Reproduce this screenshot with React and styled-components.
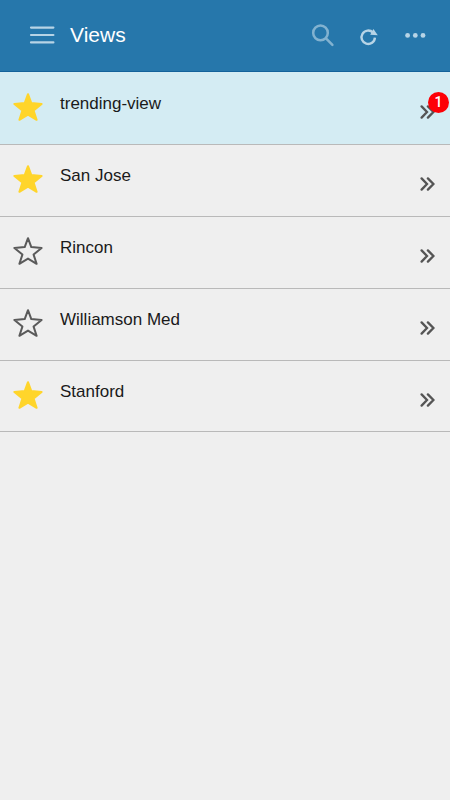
import React, { useState } from "react";
import styled, { createGlobalStyle } from "styled-components";

const GlobalStyle = createGlobalStyle`
  *, *::before, *::after {
    box-sizing: border-box;
  }
  body {
    margin: 0;
    background: #efefef;
    color: #1a1a1a;
    font-family: "Liberation Sans", Arial, sans-serif;
  }
`;

const Header = styled.header`
  display: flex;
  align-items: center;
  height: 72px;
  padding: 0 15px 2px 22px;
  background: #2677ab;
  border-bottom: 1px solid #13629a;
  color: white;
`;

const Title = styled.h1`
  flex: 1;
  margin: 0 0 0 8px;
  font-size: 21px;
  line-height: 24px;
  font-weight: 400;
`;

const Actions = styled.div`
  display: flex;
  gap: 6px;
`;

const IconButton = styled.button`
  display: flex;
  align-items: center;
  justify-content: center;
  width: 40px;
  height: 40px;
  padding: 0;
  border: 0;
  background: none;
  color: ${({ $color }) => $color || "#b7d4e6"};
  cursor: pointer;
`;

const ViewList = styled.ul`
  margin: 0;
  padding: 0;
  list-style: none;
`;

const ViewRow = styled.li`
  display: flex;
  align-items: flex-start;
  height: 72px;
  padding: 0 3px 0 8px;
  border-top: 1px solid #b9b9b9;
  background: ${({ $active }) => ($active ? "#d4ecf3" : "transparent")};

  &:first-child {
    border-top-color: transparent;
  }
  &:last-child {
    border-bottom: 1px solid #b9b9b9;
  }
`;

const StarButton = styled(IconButton)`
  margin-top: 14px;
  color: ${({ $starred }) => ($starred ? "#ffd52b" : "#5a5a5a")};
`;

const ViewName = styled.span`
  flex: 1;
  margin: 20px 0 0 12px;
  font-size: 17px;
  line-height: 22px;
`;

const OpenButton = styled(IconButton)`
  position: relative;
  margin-top: 19px;
  color: #555;
`;

const Badge = styled.span`
  position: absolute;
  top: 0;
  right: -2px;
  width: 21px;
  height: 21px;
  border-radius: 50%;
  background: #fd0006;
  color: white;
  font-family: Roboto, sans-serif;
  font-size: 14px;
  font-weight: 500;
  line-height: 21px;
  text-align: center;
`;

const MenuIcon = () => (
  <svg width="26" height="20" viewBox="0 0 26 20" fill="none" stroke="currentColor" strokeWidth="2.2" strokeLinecap="round">
    <path d="M2 2.6h22.4M2 10h22.4M2 17.4h22.4" />
  </svg>
);

const SearchIcon = () => (
  <svg width="24" height="24" viewBox="0 0 24 24" fill="none" stroke="currentColor" strokeWidth="2.5" strokeLinecap="round">
    <circle cx="9.5" cy="9.9" r="7.3" />
    <path d="M15 15.4l6.4 6.4" />
  </svg>
);

const RefreshIcon = () => (
  <svg width="20" height="24" viewBox="0 0 20 24" fill="none">
    <path d="M14 9.6A6.7 6.7 0 1 0 15.9 14.6" stroke="currentColor" strokeWidth="2.4" />
    <path d="M14.4 6l4.4 6.2-7.6-.4z" fill="currentColor" />
  </svg>
);

const MoreIcon = () => (
  <svg width="22" height="6" viewBox="0 0 22 6" fill="currentColor">
    <circle cx="3.6" cy="3.4" r="2.4" />
    <circle cx="11.3" cy="3.4" r="2.4" />
    <circle cx="19" cy="3.4" r="2.4" />
  </svg>
);

const StarIcon = ({ filled }) => (
  <svg width="30" height="28" viewBox="0 0 30 28" fill={filled ? "currentColor" : "none"} stroke="currentColor" strokeWidth="2" strokeLinejoin="round">
    <path d="M15 1.2L18.3 10.1L28.6 11L20.6 17.6L23.6 26.8L15 21.6L6.4 26.8L9.4 17.6L1.4 11L11.7 10.1Z" />
  </svg>
);

const OpenIcon = () => (
  <svg width="16" height="16" viewBox="0 0 16 16" fill="none" stroke="currentColor" strokeWidth="2.3" strokeLinecap="round">
    <path d="M2.6 2.4L8 8L2.6 13.6M8.9 2.4L14.4 8L8.9 13.6" />
  </svg>
);

const initialViews = [
  { id: 1, name: "trending-view", starred: true, active: true, alerts: 1 },
  { id: 2, name: "San Jose", starred: true },
  { id: 3, name: "Rincon", starred: false },
  { id: 4, name: "Williamson Med", starred: false },
  { id: 5, name: "Stanford", starred: true },
];

const App = () => {
  const [views, setViews] = useState(initialViews);

  const toggleStar = (id) => {
    setViews(
      views.map((view) =>
        view.id === id ? { ...view, starred: !view.starred } : view
      )
    );
  };

  return (
    <>
      <GlobalStyle />
      <Header>
        <IconButton aria-label="Menu">
          <MenuIcon />
        </IconButton>
        <Title>Views</Title>
        <Actions>
          <IconButton aria-label="Search" $color="#82b2d0">
            <SearchIcon />
          </IconButton>
          <IconButton aria-label="Refresh">
            <RefreshIcon />
          </IconButton>
          <IconButton aria-label="More">
            <MoreIcon />
          </IconButton>
        </Actions>
      </Header>
      <ViewList>
        {views.map((view) => (
          <ViewRow key={view.id} $active={view.active}>
            <StarButton
              aria-label={`Star ${view.name}`}
              aria-pressed={view.starred}
              $starred={view.starred}
              onClick={() => toggleStar(view.id)}
            >
              <StarIcon filled={view.starred} />
            </StarButton>
            <ViewName>{view.name}</ViewName>
            <OpenButton aria-label={`Open ${view.name}`}>
              <OpenIcon />
              {view.alerts && <Badge>{view.alerts}</Badge>}
            </OpenButton>
          </ViewRow>
        ))}
      </ViewList>
    </>
  );
};

export default App;
